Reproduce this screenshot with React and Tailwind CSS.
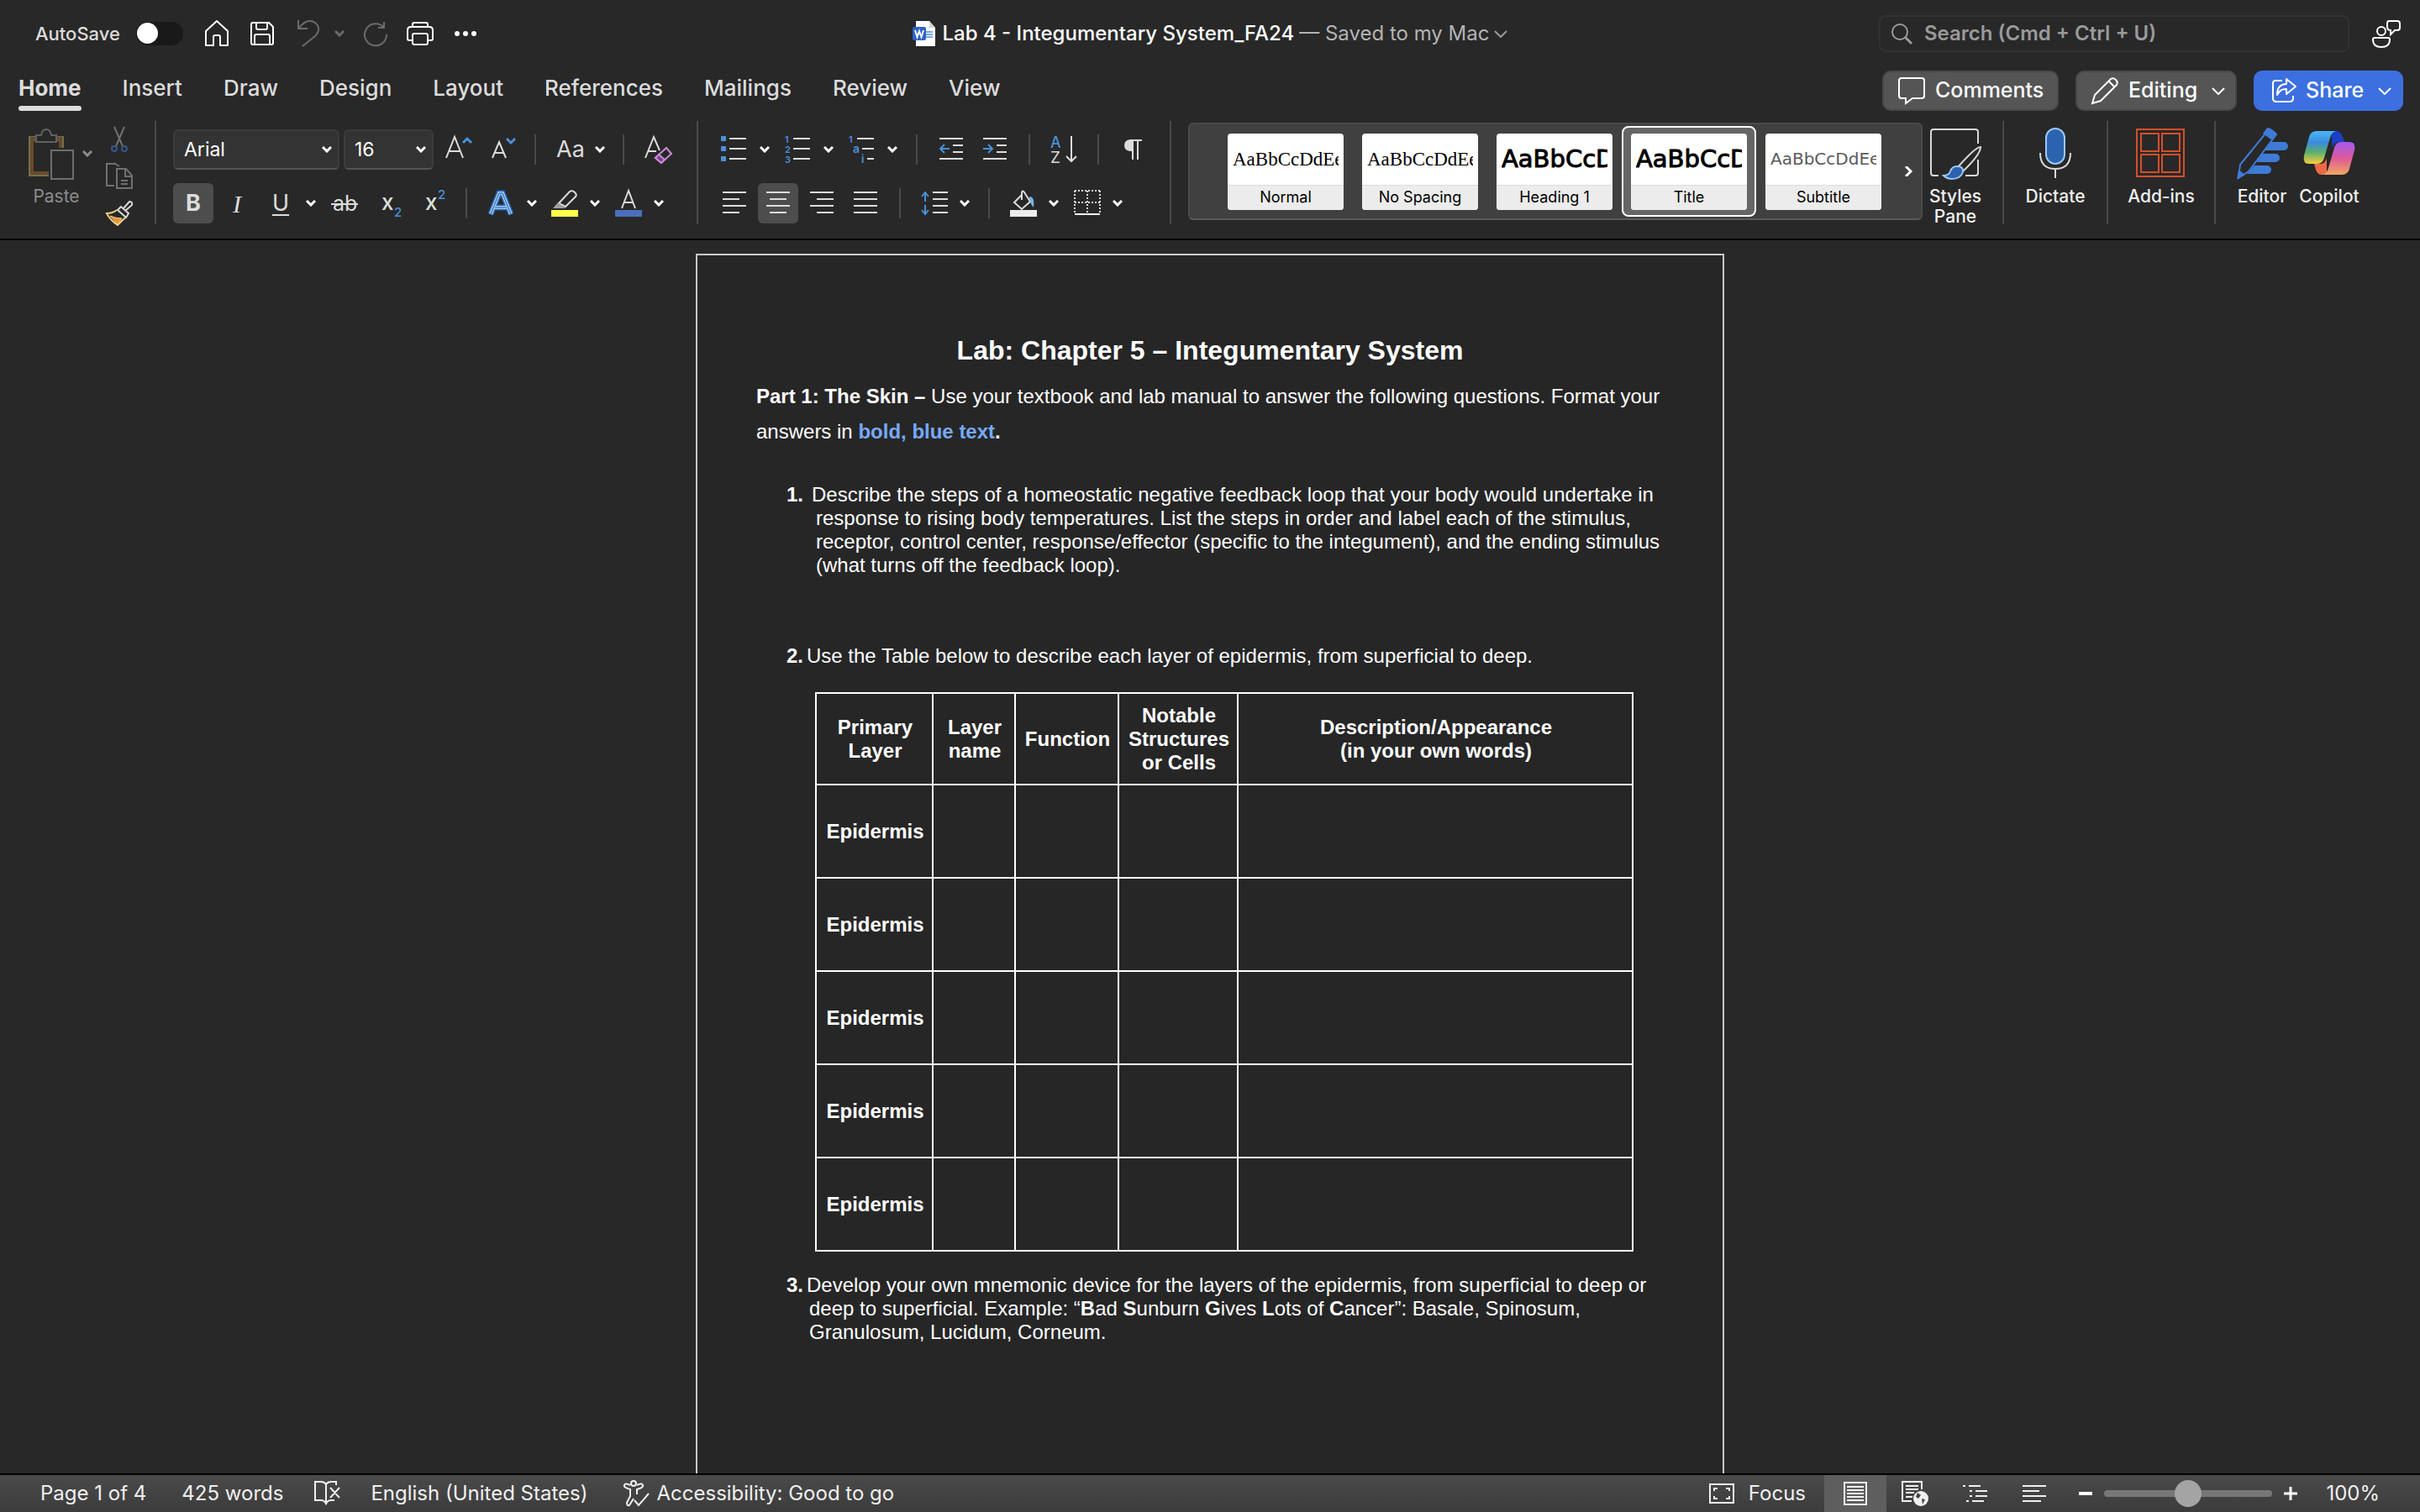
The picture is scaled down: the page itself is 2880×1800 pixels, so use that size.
const cx = (...c) => c.filter(Boolean).join(" ");

function Chevron({ className = "" }) {
  return (
    <svg className={cx("w-3 h-2 shrink-0", className)} viewBox="0 0 12 8" fill="none" stroke="currentColor" strokeWidth="3" aria-hidden="true">
      <path d="M1 1l5 5 5-5" />
    </svg>
  );
}

function WideChevron({ className = "" }) {
  return (
    <svg className={cx("w-4 h-[9px] shrink-0", className)} viewBox="0 0 16 9" fill="none" stroke="currentColor" strokeWidth="2" aria-hidden="true">
      <path d="M1 1l7 7 7-7" />
    </svg>
  );
}

function Icon({ children, className = "", size = 32, fill = "none" }) {
  return (
    <svg className={cx("block shrink-0 overflow-visible", className || "w-8 h-8")} viewBox={`0 0 ${size} ${size}`} fill={fill} stroke="currentColor" strokeWidth="2" aria-hidden="true">
      {children}
    </svg>
  );
}

function Tool({ label, className = "", children }) {
  return (
    <button type="button" aria-label={label} className={cx("shrink-0 flex items-center justify-center", className.includes("h-") ? "" : "h-8", className.includes("w-") ? "" : "w-8", className)}>
      {children}
    </button>
  );
}

function MenuTool({ label, className = "", children }) {
  return (
    <button type="button" aria-label={label} className={cx("shrink-0 flex items-center gap-[14px]", className)}>
      {children}
      <Chevron className="text-white" />
    </button>
  );
}

const Bar = ({ className = "" }) => <span className={cx("w-[2px] h-9 bg-[#4a4a4a] shrink-0", className)} />;
const GroupBar = ({ className = "" }) => <span className={cx("w-[2px] h-[123px] mt-3 bg-[#4a4a4a] shrink-0", className)} />;

function Glyph({ x = 0, y, size, fill = "#dcdcdc", weight = 400, children }) {
  return (
    <text x={x} y={y} fontSize={size} fill={fill} fontWeight={weight} stroke="none" fontFamily="Inter, sans-serif">
      {children}
    </text>
  );
}

function TitleBar() {
  return (
    <div className="h-20 grid grid-cols-[1fr_auto_1fr] items-center">
      <div className="flex items-center pl-[42px] text-white">
        <label htmlFor="autosave" className="text-[22px] font-medium text-[#dcdcdc] w-[120px] shrink-0">AutoSave</label>
        <input
          id="autosave"
          type="checkbox"
          role="switch"
          className="appearance-none w-14 h-7 rounded-full bg-[#191919] shrink-0 before:block before:w-[25px] before:h-[25px] before:m-[1px] before:rounded-full before:bg-white"
        />
        <Tool label="Home" className="ml-6">
          <Icon><path d="M3 13L16 1l13 12v17H20V20q0-2-2-2h-4q-2 0-2 2v10H3z" strokeLinejoin="round" /></Icon>
        </Tool>
        <Tool label="Save" className="ml-[22px]">
          <Icon>
            <path d="M5 3h19l5 5v19q0 2-2 2H5q-2 0-2-2V5q0-2 2-2z" />
            <path d="M9 3v6q0 2 2 2h9q2 0 2-2V3M7 29V19q0-2 2-2h14q2 0 2 2v10" />
          </Icon>
        </Tool>
        <Tool label="Undo" className="ml-6 text-[#6b6b6b]">
          <Icon><path d="M3 0v10h11M3 10C10 1 17-1 23 3c7 6 4 12 0 16L8 31" /></Icon>
        </Tool>
        <Chevron className="ml-[14px] text-[#6b6b6b]" />
        <Tool label="Redo" className="ml-[21px] text-[#6b6b6b]">
          <Icon><path d="M26 2v7h-7M26 9A13 13 0 1 0 29 17" /></Icon>
        </Tool>
        <Tool label="Print" className="ml-[21px]">
          <Icon className="w-[34px] h-8">
            <path d="M7 8V5q0-2 2-2h14q2 0 2 2v3M7 24H3q-2 0-2-2V12q0-4 4-4h22q4 0 4 4v10q0 2-2 2h-4" />
            <path d="M9 16h14q2 0 2 2v9q0 2-2 2H9q-2 0-2-2v-9q0-2 2-2z" />
          </Icon>
        </Tool>
        <Tool label="More" className="ml-[22px]">
          <Icon fill="currentColor">
            <g stroke="none"><circle cx="6" cy="16" r="3" /><circle cx="16" cy="16" r="3" /><circle cx="26" cy="16" r="3" /></g>
          </Icon>
        </Tool>
      </div>

      <button type="button" className="flex items-center text-[24px] whitespace-nowrap">
        <svg className="w-7 h-8 mr-2" viewBox="0 0 28 32" aria-hidden="true">
          <path d="M4 1h16l7 8v22H4z" fill="#fff" />
          <path d="M20 1l7 8h-7z" fill="#d4d4d4" />
          <path d="M16 14h8M16 17h8M16 20h8" stroke="#4a8be0" strokeWidth="1.5" />
          <rect x="0" y="8" width="16" height="16" rx="2" fill="#2f63c4" />
          <path d="M3 12l2.500 8L8 13l2.500 7L13 12" fill="none" stroke="#fff" strokeWidth="2" />
        </svg>
        <span className="text-white font-medium">Lab 4 - Integumentary System_FA24</span>
        <span className="text-[#b4b4b4] ml-[6px]">— Saved to my Mac</span>
        <WideChevron className="ml-[6px] text-[#9a9a9a]" />
      </button>

      <div className="flex items-center justify-end pr-[23px]">
        <label htmlFor="search" className="w-[560px] h-11 rounded-lg border-2 border-[#323232] flex items-center pl-3 text-[#9a9a9a]">
          <Icon className="w-[26px] h-[26px]" size={26}><circle cx="11" cy="11" r="9" /><path d="M17 17l8 8" strokeWidth="3" /></Icon>
          <input id="search" type="text" aria-label="Search" placeholder="Search (Cmd + Ctrl + U)" className="ml-[14px] flex-1 min-w-0 bg-transparent outline-none text-[24px] font-semibold placeholder:text-[#9a9a9a]" />
        </label>
        <Tool label="Account" className="ml-[26px] w-[35px] text-white">
          <Icon className="w-[34px] h-[34px]" size={34}>
            <circle cx="11" cy="14" r="5" />
            <path d="M3 22h16q2 0 2 2c0 6-4 9-10 9S1 30 1 24q0-2 2-2zM20 2h10q3 0 3 3v5q0 3-3 3h-3l-5 5v-5q-4 0-4-4V5q0-3 2-3z" />
          </Icon>
        </Tool>
      </div>
    </div>
  );
}

const tabs = ["Home", "Insert", "Draw", "Design", "Layout", "References", "Mailings", "Review", "View"];

function TabRow() {
  return (
    <div className="h-[52px] flex items-start justify-between pl-[22px] pr-5">
      <nav className="flex gap-[49px] text-[26px] leading-[50px] text-[#dcdcdc] font-medium">
        {tabs.map((t) => (
          <a key={t} href="#" className={cx("block h-[52px]", t === "Home" && "font-bold relative")}>
            {t}
            {t === "Home" && <span className="absolute left-0 right-0 bottom-0 h-[6px] rounded-full bg-[#dcdcdc]" />}
          </a>
        ))}
      </nav>
      <div className="flex gap-5 pt-1 text-[25px] font-medium text-white">
        <button type="button" className="h-12 w-[210px] rounded-[10px] bg-[#555] border-2 border-[#484848] pl-[17px] flex items-center gap-3">
          <Icon><path d="M4 1h24q3 0 3 3v18q0 3-3 3H17l-8 6v-6H4q-3 0-3-3V4q0-3 3-3z" /></Icon>
          Comments
        </button>
        <button type="button" className="h-12 w-[192px] rounded-[10px] bg-[#555] border-2 border-[#484848] pl-[17px] pr-3 flex items-center gap-3">
          <Icon><path d="M1 31l3-10L23 2q3-2 6 1t1 6L11 28zM21 5l6 6" /></Icon>
          Editing
          <WideChevron className="ml-auto" />
        </button>
        <button type="button" className="h-12 w-[178px] rounded-[10px] bg-[#3c6fe0] pl-5 pr-[14px] flex items-center gap-[10px]">
          <Icon>
            <path d="M14 4H6Q3 4 3 7v18q0 4 4 4h16q4 0 4-4v-3" />
            <path d="M19 2l11 9-11 9v-6c-6 0-8 2-11 7 0-8 3-13 11-13z" strokeLinejoin="round" />
          </Icon>
          Share
          <WideChevron className="ml-auto" />
        </button>
      </div>
    </div>
  );
}

function ClipboardGroup() {
  return (
    <div className="flex pl-8 w-[184px] shrink-0">
      <button type="button" className="w-[70px] pt-5 flex flex-col items-center text-[21px] leading-6 text-[#8c8c8c]">
        <svg className="w-[56px] h-[62px] mb-2 mr-[10px]" viewBox="0 0 56 62" fill="none" aria-hidden="true">
          <path d="M8 13H3v42h21M34 13h5v11" stroke="#6f7055" strokeWidth="6" />
          <path d="M8 13H4v41h20M34 13h4v11" stroke="#6b4a28" strokeWidth="4" />
          <path d="M9 9h6q1-7 6-7t6 7h6v8H9z" stroke="#606060" strokeWidth="2" fill="#282828" />
          <path d="M27 27h26v34H27z" stroke="#6e6e6e" strokeWidth="2" />
        </svg>
        Paste
      </button>
      <Chevron className="mt-[47px] text-[#8c8c8c] -ml-1" />
      <div className="ml-4 pt-[18px] flex flex-col gap-3">
        <Tool label="Cut">
          <Icon>
            <path d="M10 1l10 23M22 1L12 24" stroke="#707070" />
            <g stroke="#35588a"><circle cx="10" cy="27" r="3" /><circle cx="22" cy="27" r="3" /></g>
          </Icon>
        </Tool>
        <Tool label="Copy" className="text-[#707070]">
          <Icon><path d="M10 27H1V1h10l5 3M13 7h11l7 8v15H13zM23 7v9h8M18 21h8M18 25h8" /></Icon>
        </Tool>
        <Tool label="Format painter">
          <Icon>
            <path d="M21 10l7-8q4 0 3 4l-8 7M18 8l-4 4 10 9 3-5z" stroke="#d8d8d8" />
            <path d="M13 12q-5 4-12 4 4 8 13 14l9-9" stroke="#f0cf7c" />
            <path d="M5 19q7 3 14 3l-5 7z" fill="#e8923c" stroke="#f0cf7c" strokeWidth="1" />
          </Icon>
        </Tool>
      </div>
    </div>
  );
}

function RibbonSelect({ label, value, className }) {
  return (
    <div className={cx("relative h-12 shrink-0", className)}>
      <select aria-label={label} defaultValue={value} className="appearance-none w-full h-full rounded-md bg-[#333] border-2 border-[#3b3b3b] border-b-[#555] pl-[11px] text-[23px] text-white">
        <option>{value}</option>
      </select>
      <Chevron className="absolute right-[9px] top-5 text-white pointer-events-none" />
    </div>
  );
}

function FontGroup() {
  return (
    <div className="pt-[22px] pl-5 w-[643px] shrink-0 flex flex-col gap-4 text-[#dcdcdc]">
      <div className="flex items-center h-12">
        <RibbonSelect label="Font" value="Arial" className="w-[198px]" />
        <RibbonSelect label="Font size" value="16" className="ml-[5px] w-[107px]" />
        <Tool label="Increase font size" className="ml-[14px]">
          <Icon><path d="M1 26L11 1l10 25M5 18h12" /><path d="M21 8l5-5 5 5" stroke="#4a90d9" strokeWidth="3" /></Icon>
        </Tool>
        <Tool label="Decrease font size" className="ml-[22px]">
          <Icon><path d="M2 26l8-19 8 19M5 20h10" /><path d="M19 3l5 5 5-5" stroke="#4a90d9" strokeWidth="3" /></Icon>
        </Tool>
        <Bar className="ml-5" />
        <MenuTool label="Change case" className="ml-6">
          <span className="w-8 text-[27px] leading-8 text-left">Aa</span>
        </MenuTool>
        <Bar className="ml-[21px]" />
        <Tool label="Clear formatting" className="ml-6">
          <Icon>
            <path d="M1 26L11 1l7 16M5 18h9" />
            <path d="M26 14l6 7-12 11-7-6z" stroke="#c98bd8" fill="#282828" /><path d="M17 22l7 6-4 4-7-6z" stroke="#c98bd8" fill="#7a3f8c" />
          </Icon>
        </Tool>
      </div>
      <div className="flex items-center h-12">
        <Tool label="Bold" className="w-12 h-12 rounded-md bg-[#4d4d4d] text-[27px] font-bold">B</Tool>
        <Tool label="Italic" className="ml-3 text-[30px] font-['Liberation_Serif',serif] italic">I</Tool>
        <MenuTool label="Underline" className="ml-5"><span className="w-8 text-[27px] leading-8 underline underline-offset-4 decoration-2">U</span></MenuTool>
        <Tool label="Strikethrough" className="ml-[18px]">
          <Icon><Glyph x={2} y={25} size={25}>ab</Glyph><path d="M0 17h32" /></Icon>
        </Tool>
        <Tool label="Subscript" className="ml-6">
          <Icon><Glyph x={4} y={24} size={26} weight={500}>x</Glyph><Glyph x={19} y={32} size={15} fill="#4a90d9" weight={500}>2</Glyph></Icon>
        </Tool>
        <Tool label="Superscript" className="ml-5">
          <Icon><Glyph x={4} y={24} size={26} weight={500}>x</Glyph><Glyph x={19} y={11} size={15} fill="#4a90d9" weight={500}>2</Glyph></Icon>
        </Tool>
        <Bar className="ml-5" />
        <MenuTool label="Text effects" className="ml-[25px]">
          <Icon>
            <path d="M3 29L13 4h4l10 25M8 21h14" stroke="#2667bd" strokeWidth="7" />
            <path d="M3 29L13 4h4l10 25M8 21h14" stroke="#9cc8f2" strokeWidth="4" />
            <path d="M3 29L13 4h4l10 25M8 21h14" stroke="#2b5f9e" strokeWidth="1" />
          </Icon>
        </MenuTool>
        <MenuTool label="Highlight" className="ml-[17px]">
          <Icon>
            <path d="M9 16L22 2q3-2 6 1t1 5L17 20z" /><path d="M8 15l9 7H2z" fill="#a0a0a0" stroke="none" /><path d="M0 24h32v8H0z" fill="#ffff4d" stroke="none" />
          </Icon>
        </MenuTool>
        <MenuTool label="Font color" className="ml-[18px]">
          <Icon><path d="M8 22L16 1l8 21M11 15h10" /><path d="M0 24h32v8H0z" fill="#4a70bd" stroke="none" /></Icon>
        </MenuTool>
      </div>
    </div>
  );
}

function ParagraphGroup() {
  const blue = "#4a90d9";
  return (
    <div className="pt-[22px] pl-[27px] w-[561px] shrink-0 flex flex-col gap-4 text-[#dcdcdc]">
      <div className="flex items-center h-12">
        <MenuTool label="Bullets">
          <Icon>
            <path d="M0 0h6v6H0zM0 12h6v6H0zM0 24h6v6H0z" fill={blue} stroke="none" /><path d="M10 3h20M10 15h20M10 27h20" />
          </Icon>
        </MenuTool>
        <MenuTool label="Numbering" className="ml-[18px]">
          <Icon>
            <Glyph y={8} size={11} fill={blue} weight={600}>1</Glyph><Glyph y={20} size={11} fill={blue} weight={600}>2</Glyph><Glyph y={32} size={11} fill={blue} weight={600}>3</Glyph>
            <path d="M10 3h20M10 15h20M10 27h20" />
          </Icon>
        </MenuTool>
        <MenuTool label="Multilevel list" className="ml-[18px]">
          <Icon>
            <Glyph y={8} size={11} fill={blue} weight={600}>1</Glyph><Glyph x={5} y={20} size={14} fill={blue} weight={600}>a</Glyph><Glyph x={15} y={32} size={13} fill={blue} weight={600}>i</Glyph>
            <path d="M10 3h20M16 15h14M22 27h8" />
          </Icon>
        </MenuTool>
        <Bar className="ml-[22px]" />
        <Tool label="Decrease indent" className="ml-6">
          <Icon><path d="M2 3h28M18 11h12M18 19h12M2 27h28" /><path d="M14 15H3M8 10l-5 5 5 5" stroke={blue} /></Icon>
        </Tool>
        <Tool label="Increase indent" className="ml-5">
          <Icon><path d="M2 3h28M18 11h12M18 19h12M2 27h28" /><path d="M2 15h11M8 10l5 5-5 5" stroke={blue} /></Icon>
        </Tool>
        <Bar className="ml-6" />
        <Tool label="Sort" className="ml-6">
          <Icon>
            <Glyph y={14} size={18} fill={blue} weight={500}>A</Glyph><Glyph y={32} size={19}>Z</Glyph><path d="M25 0v30M19 24l6 6 6-6" />
          </Icon>
        </Tool>
        <Bar className="ml-6" />
        <Tool label="Show marks" className="ml-6">
          <Icon><path d="M14 5h13M16 4v24M22 4v24" /><path d="M17 4h-4q-7 1-7 7t7 7h4z" fill="currentColor" stroke="none" /></Icon>
        </Tool>
      </div>
      <div className="flex items-center h-12">
        <Tool label="Align left"><Icon><path d="M2 3h28M2 11h20M2 19h28M2 27h20" /></Icon></Tool>
        <Tool label="Center" className="ml-3 w-12 h-12 rounded-md bg-[#4d4d4d]"><Icon><path d="M2 3h28M6 11h20M2 19h28M6 27h20" /></Icon></Tool>
        <Tool label="Align right" className="ml-3"><Icon><path d="M2 3h28M10 11h20M2 19h28M10 27h20" /></Icon></Tool>
        <Tool label="Justify" className="ml-5"><Icon><path d="M2 3h28M2 11h28M2 19h28M2 27h28" /></Icon></Tool>
        <Bar className="ml-6" />
        <MenuTool label="Line spacing" className="ml-6">
          <Icon><path d="M14 3h18M14 11h18M14 19h18M14 27h18" /><path d="M5 3v11M1 8l4-5 4 5M5 18v11M1 24l4 5 4-5" stroke={blue} /></Icon>
        </MenuTool>
        <Bar className="ml-[22px]" />
        <MenuTool label="Shading" className="ml-6">
          <Icon>
            <path d="M14 6L5 15l9 8 10-9L17 3q-2-3-3 0v9" /><path d="M23 8c5 0 6 5 5 13-2-3-5-6-5-13z" fill="#7db3e8" stroke="none" />
            <path d="M0 24h32v8H0z" fill="#ececec" stroke="none" />
          </Icon>
        </MenuTool>
        <MenuTool label="Borders" className="ml-[18px]">
          <Icon><path d="M1 1h30M1 1v28M31 1v28M16 1v28M1 15h30" strokeDasharray="2 2" /><path d="M1 29h30" stroke="#fff" /></Icon>
        </MenuTool>
      </div>
    </div>
  );
}

const serif = "font-['Liberation_Serif',serif] text-[23px] text-black";
const heading = "font-['DejaVu_Sans',sans-serif] text-[29px] text-black [-webkit-text-stroke:1px_black]";

const styles = [
  { name: "Normal", sample: "AaBbCcDdEe", font: serif },
  { name: "No Spacing", sample: "AaBbCcDdEe", font: serif },
  { name: "Heading 1", sample: "AaBbCcDd", font: heading },
  { name: "Title", sample: "AaBbCcDd", font: heading, active: true },
  { name: "Subtitle", sample: "AaBbCcDdEe", font: "font-['DejaVu_Sans',sans-serif] text-[20px] text-[#5a5a5a]" },
];

function StyleGallery() {
  return (
    <div className="ml-5 mt-[14px] flex-1 h-[116px] rounded-md bg-[#404040] border-2 border-[#4a4a4a] border-b-[#5a5a5a] pl-[34px] flex items-center overflow-hidden">
      {styles.map((s) => (
        <button
          key={s.name}
          type="button"
          className={cx("w-[160px] h-[108px] shrink-0 rounded-lg border-2 flex items-center justify-center", s.active ? "bg-[#666] border-white" : "border-transparent")}
        >
          <span className="w-[138px] h-[91px] rounded-sm overflow-hidden bg-white flex flex-col">
            <span className={cx("h-[61px] mx-[6px] overflow-hidden whitespace-nowrap text-left leading-[61px]", s.font)}>{s.sample}</span>
            <span className="h-[30px] bg-[#ececec] border-t border-[#dedede] text-[18px] leading-7 text-black">{s.name}</span>
          </span>
        </button>
      ))}
      <button type="button" aria-label="More styles" className="ml-auto mr-[9px] text-white">
        <svg className="w-3 h-3" viewBox="0 0 12 12" fill="none" stroke="currentColor" strokeWidth="3"><path d="M3 0l6 6-6 6" /></svg>
      </button>
    </div>
  );
}

function BigTool({ label, className = "", children }) {
  return (
    <button type="button" className={cx("pt-[18px] shrink-0 flex flex-col items-center justify-start text-[21px] font-medium leading-6 text-[#f0f0f0]", className)}>
      <svg className="w-16 h-16 mb-2 shrink-0" viewBox="0 0 64 64" fill="none" stroke="currentColor" strokeWidth="2" aria-hidden="true">{children}</svg>
      <span className="text-center">{label}</span>
    </button>
  );
}

function BigTools() {
  return (
    <div className="flex shrink-0 pr-[68px] items-start h-full">
      <BigTool label="Styles Pane" className="w-[78px] px-1">
        <path d="M12 59H6q-3 0-3-3V7q0-3 3-3h50q3 0 3 3v14M59 40v16q0 3-3 3H44" stroke="#d8d8d8" />
        <path d="M62 25q-6 0-27 24l6 5Q62 34 62 25z" stroke="#d8d8d8" fill="#282828" />
        <path d="M34 48q8 0 7 7-3 8-13 8-6 0-10-4 6 0 8-5 2-6 8-6z" fill="#2b63ae" stroke="#9cc8f2" />
      </BigTool>
      <GroupBar className="ml-[17px]" />
      <BigTool label="Dictate" className="w-[122px]">
        <path d="M14 32q0 19 18 19t18-19M32 51v11" stroke="#d8d8d8" />
        <rect x="21" y="3" width="22" height="42" rx="11" fill="#2b63ae" stroke="#9cc8f2" />
      </BigTool>
      <GroupBar />
      <BigTool label="Add-ins" className="w-[126px]">
        <g stroke="#d2502a"><path d="M3 4h56v56H3z" /><path d="M8 9h21v21H8zM33 9h21v21H33zM8 34h21v21H8zM33 34h21v21H33z" /></g>
      </BigTool>
      <GroupBar />
      <BigTool label="Editor" className="w-[80px] ml-[15px]">
        <g fill="#3f7bd6" stroke="none">
          <path d="M42 19h16a5 5 0 0 1 0 10H35zM32 33h16a5 5 0 0 1 0 10H26zM23 47h15a5 5 0 0 1 0 10H14z" />
        </g>
        <path d="M40 4l9 6-33 44-12 8 2-16z" fill="#282828" stroke="#3f7bd6" strokeWidth="2" />
        <path d="M38 2q6 0 12 8l-6 7-11-8zM2 63l2-11 8 6z" fill="#3f7bd6" stroke="none" />
      </BigTool>
      <BigTool label="Copilot" className="w-[80px]">
        <defs>
          <linearGradient id="cpA" x1="0" y1="0" x2="0" y2="1">
            <stop offset="0" stopColor="#4cb8f5" /><stop offset=".35" stopColor="#3a8be0" /><stop offset=".65" stopColor="#5fae6c" /><stop offset="1" stopColor="#f5cf3c" />
          </linearGradient>
          <linearGradient id="cpB" x1="0" y1="0" x2="0" y2="1">
            <stop offset="0" stopColor="#a25af0" /><stop offset=".5" stopColor="#dd5a98" /><stop offset="1" stopColor="#f2a860" />
          </linearGradient>
        </defs>
        <g stroke="none">
          <path d="M34 6h6q6 0 8 7l2 6h-6q-6 0-8 7z" fill="#1c3fc4" />
          <path d="M29 58h-6q-5 0-7-6l-2-7h8q5 0 7-7z" fill="#ec6a44" />
          <path d="M17 6h23q-5 1-7 8l-7 24q-2 7-8 7H8q-8 0-6-10L8 13q2-7 9-7z" fill="url(#cpA)" />
          <path d="M47 58H24q5-1 7-8l7-24q2-7 8-7h10q8 0 6 10l-6 22q-2 7-9 7z" fill="url(#cpB)" />
        </g>
      </BigTool>
    </div>
  );
}

function Num({ children, className }) {
  return <b className={cx("inline-block indent-0", className)}>{children}</b>;
}

function Document() {
  const cell = "border-2 border-white p-0 pl-[2px] text-center align-middle";
  return (
    <article className="mx-auto mt-4 w-[1224px] shrink-0 h-[1584px] border-2 border-[#c8c8c8] bg-[#262626] px-[70px] pt-[93px] text-white text-[24px] leading-7 font-['Liberation_Sans',Arial,sans-serif]">
      <h1 className="text-[32px] leading-10 font-bold text-center">Lab: Chapter 5 – Integumentary System</h1>
      <p className="mt-[14px] leading-[42px]">
        <b>Part 1: The Skin – </b>Use your textbook and lab manual to answer the following questions. Format your answers in{" "}
        <b className="text-[#78a9f9]">bold, blue text</b><b>.</b>
      </p>
      <ol className="mt-10">
        <li className="pl-[71px] -indent-[35px]">
          <Num className="w-[30px]">1.</Num>Describe the steps of a homeostatic negative feedback loop that your body would undertake in response to rising body
          temperatures. List the steps in order and label each of the stimulus, receptor, control center, response/effector (specific to the
          integument), and the ending stimulus (what turns off the feedback loop).
        </li>
        <li className="mt-20 pl-[63px] -indent-[27px]">
          <Num className="w-6">2.</Num>Use the Table below to describe each layer of epidermis, from superficial to deep.
        </li>
      </ol>
      <table className="mt-[29px] ml-[70px] w-[974px] table-fixed border-collapse font-bold">
        <colgroup>
          <col className="w-[139px]" /><col className="w-[98px]" /><col className="w-[123px]" /><col className="w-[142px]" /><col />
        </colgroup>
        <thead>
          <tr className="h-[109px]">
            <th className={cell}>Primary<br />Layer</th>
            <th className={cell}>Layer<br />name</th>
            <th className={cell}>Function</th>
            <th className={cell}>Notable<br />Structures<br />or Cells</th>
            <th className={cell}>Description/Appearance<br />(in your own words)</th>
          </tr>
        </thead>
        <tbody>
          {[1, 2, 3, 4, 5].map((n) => (
            <tr key={n} className="h-[111px]">
              <td className={cell}>Epidermis</td>
              <td className={cell} /><td className={cell} /><td className={cell} /><td className={cell} />
            </tr>
          ))}
        </tbody>
      </table>
      <ol start="3" className="mt-[26px]">
        <li className="pl-[63px] -indent-[27px]">
          <Num className="w-6">3.</Num>Develop your own mnemonic device for the layers of the epidermis, from superficial to deep or deep to superficial.
          Example: “<b>B</b>ad <b>S</b>unburn <b>G</b>ives <b>L</b>ots of <b>C</b>ancer”: Basale, Spinosum, Granulosum, Lucidum, Corneum.
        </li>
      </ol>
    </article>
  );
}

function StatusBar() {
  return (
    <footer className="h-[46px] shrink-0 border-t-2 border-black bg-gradient-to-b from-[#4a4a4a] to-[#3c3c3c] flex items-center justify-between text-[24px] text-[#f0f0f0] whitespace-nowrap">
      <div className="flex items-center pl-12">
        <span>Page 1 of 4</span>
        <span className="ml-[42px]">425 words</span>
        <Tool label="Proofing" className="ml-9">
          <Icon><path d="M15 5q-2-3-6-3H2v22h7q4 0 6 4 2-4 6-4h4M15 5v23M15 5q2-3 6-3h6v4M20 9l11 12M31 9L20 21" /></Icon>
        </Tool>
        <span className="ml-9">English (United States)</span>
        <button type="button" className="ml-[42px] flex items-center gap-2">
          <Icon>
            <circle cx="13" cy="4" r="3" />
            <path d="M9 6Q3 3 2 6t7 5v8L5 27q0 4 3 3l5-8M17 6q6-3 7 0t-7 5v6M14 24l5 6L31 16" />
          </Icon>
          Accessibility: Good to go
        </button>
      </div>
      <div className="flex items-center pr-[48px] h-full">
        <button type="button" className="flex items-center gap-4">
          <Icon>
            <path d="M2 5h28v22H2z" /><path d="M7 13v-3h4M21 10h4v3M25 19v3h-4M11 22H7v-3" />
          </Icon>
          Focus
        </button>
        <Tool label="Print layout" className="ml-[22px] w-[74px] h-full bg-[#5e5e5e]">
          <Icon><path d="M3 3h26v26H3zM6 8h20M6 12h20M6 16h20M6 20h20M6 24h20" /></Icon>
        </Tool>
        <Tool label="Web layout" className="ml-[18px]">
          <Icon>
            <path d="M12 25H1V2h23v9M5 7h15M5 11h15M5 15h10M5 20h8" /><circle cx="23" cy="22" r="9" fill="#f0f0f0" stroke="none" />
            <path d="M19 15l4 3-3 4-3-2zM24 22l4 1-3 6zM26 15l2 4" fill="#444" stroke="none" />
          </Icon>
        </Tool>
        <Tool label="Outline" className="ml-10"><Icon><path d="M1 7h3M8 7h14M9 13h3M16 13h14M9 19h3M16 19h14M5 25h3M12 25h14" /></Icon></Tool>
        <Tool label="Draft" className="ml-[38px]"><Icon><path d="M2 7h28M2 13h20M2 19h28M2 25h22" /></Icon></Tool>
        <button type="button" aria-label="Zoom out" className="ml-[37px] w-4 h-4"><svg viewBox="0 0 16 16" stroke="#fff" strokeWidth="4"><path d="M0 8h16" /></svg></button>
        <input
          type="range"
          aria-label="Zoom"
          min="0"
          max="100"
          defaultValue="50"
          className="ml-[14px] w-[200px] h-2 rounded-full appearance-none bg-[#777] [&::-webkit-slider-thumb]:appearance-none [&::-webkit-slider-thumb]:w-8 [&::-webkit-slider-thumb]:h-8 [&::-webkit-slider-thumb]:rounded-full [&::-webkit-slider-thumb]:bg-[#a4a4a4]"
        />
        <button type="button" aria-label="Zoom in" className="ml-[14px] w-4 h-4"><svg viewBox="0 0 16 16" stroke="#fff" strokeWidth="3"><path d="M0 8h16M8 0v16" /></svg></button>
        <span className="ml-8 w-[66px] text-right">100%</span>
      </div>
    </footer>
  );
}

export default function App() {
  return (
    <div className="h-screen flex flex-col bg-[#282828] font-['Inter',sans-serif] overflow-hidden">
      <header className="shrink-0 border-b-2 border-black">
        <TitleBar />
        <TabRow />
        <div className="h-[152px] flex items-start">
          <ClipboardGroup />
          <GroupBar />
          <FontGroup />
          <GroupBar />
          <ParagraphGroup />
          <GroupBar />
          <StyleGallery />
          <BigTools />
        </div>
      </header>
      <main className="flex-1 min-h-0 overflow-hidden">
        <Document />
      </main>
      <StatusBar />
    </div>
  );
}
